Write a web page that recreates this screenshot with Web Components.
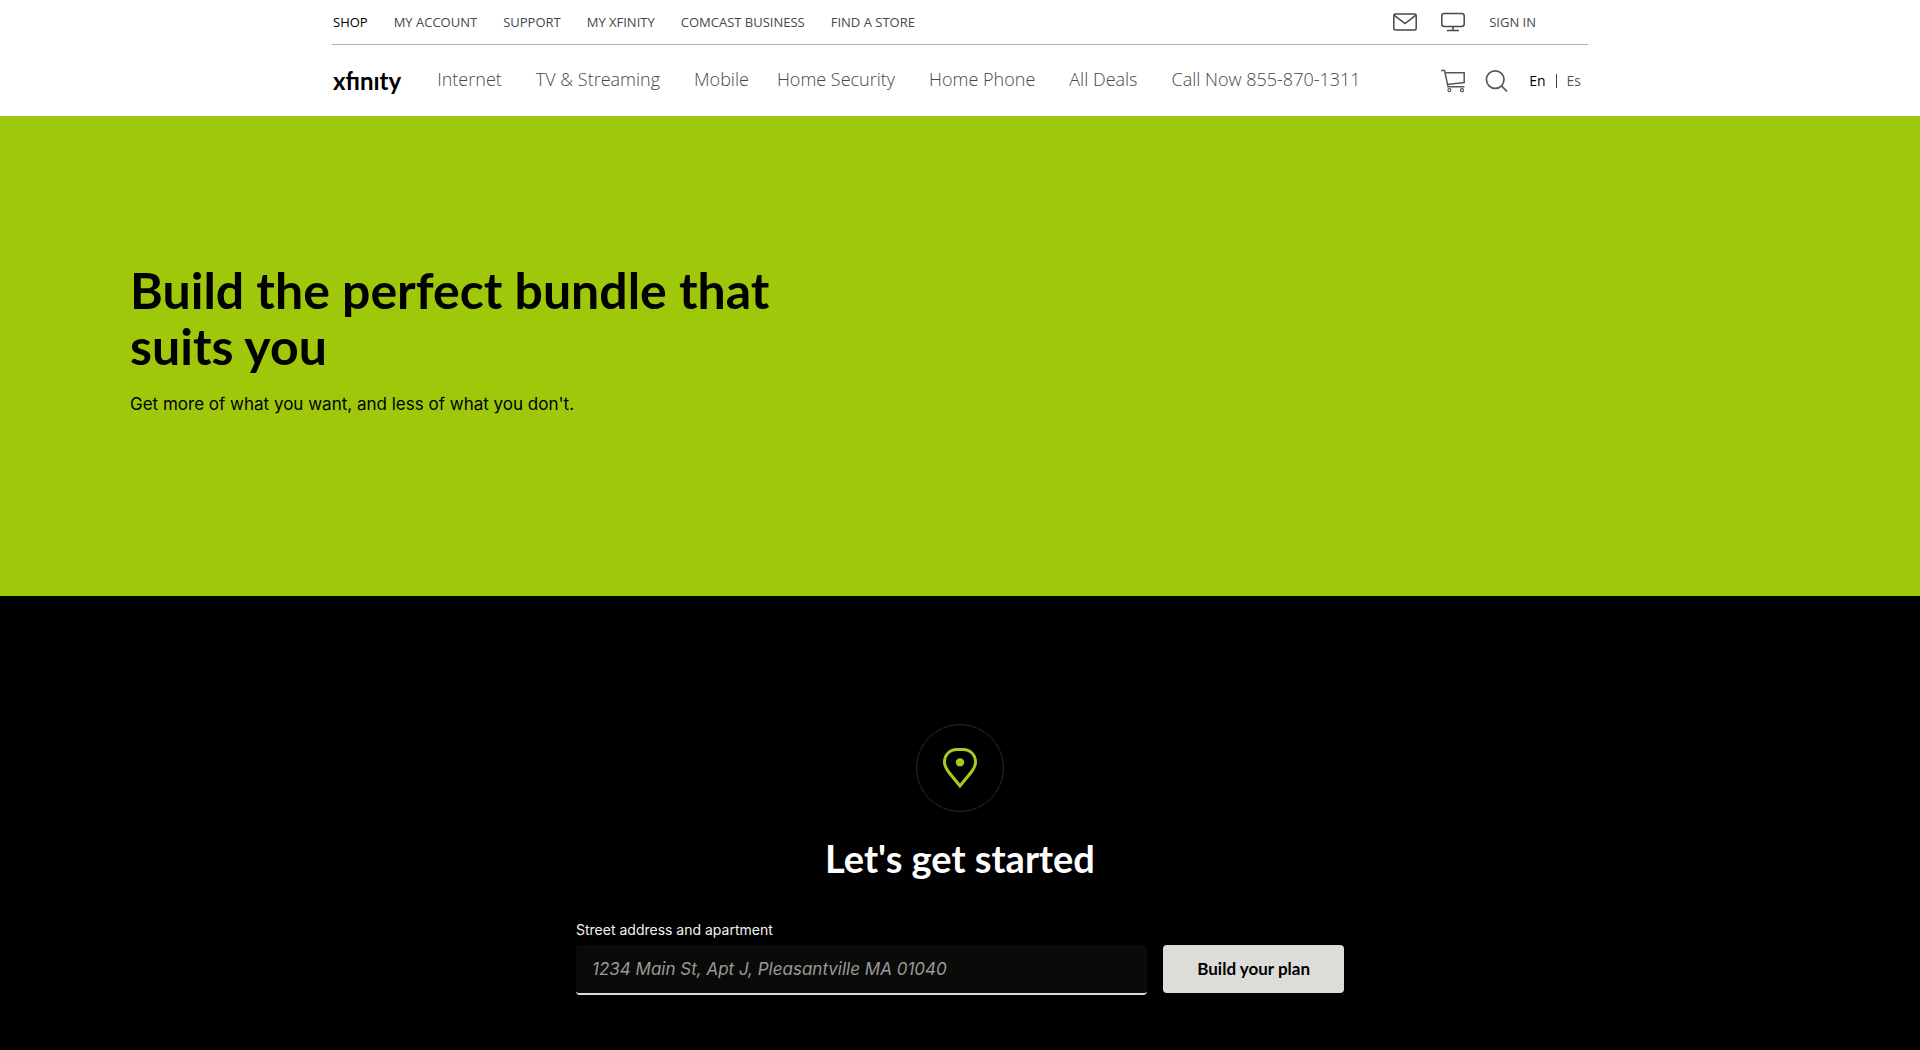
<!DOCTYPE html>
<html lang="en">
<head>
<meta charset="utf-8">
<title>Build your bundle</title>
<style>
  body {
    margin: 0;
    min-height: 100vh;
    display: flex;
    flex-direction: column;
    background: #000;
    font-family: "Open Sans", "Noto Sans", sans-serif;
  }
</style>
</head>
<body>

<xf-header>
  <xf-link slot="utility" kind="utility" current>SHOP</xf-link>
  <xf-link slot="utility" kind="utility">MY ACCOUNT</xf-link>
  <xf-link slot="utility" kind="utility">SUPPORT</xf-link>
  <xf-link slot="utility" kind="utility">MY XFINITY</xf-link>
  <xf-link slot="utility" kind="utility">COMCAST BUSINESS</xf-link>
  <xf-link slot="utility" kind="utility">FIND A STORE</xf-link>

  <xf-link slot="account" label="Email"><xf-icon name="mail"></xf-icon></xf-link>
  <xf-link slot="account" label="TV"><xf-icon name="tv"></xf-icon></xf-link>
  <xf-link slot="account" kind="utility">SIGN IN</xf-link>

  <xf-link slot="main" kind="main">Internet</xf-link>
  <xf-link slot="main" kind="main">TV &amp; Streaming</xf-link>
  <xf-link slot="main" kind="main" tight>Mobile</xf-link>
  <xf-link slot="main" kind="main">Home Security</xf-link>
  <xf-link slot="main" kind="main">Home Phone</xf-link>
  <xf-link slot="main" kind="main">All Deals</xf-link>
  <xf-link slot="main" kind="main">Call Now 855-870-1311</xf-link>

  <xf-link slot="tools" label="Cart"><xf-icon name="cart"></xf-icon></xf-link>
  <xf-link slot="tools" label="Search"><xf-icon name="search"></xf-icon></xf-link>
  <xf-language slot="tools"></xf-language>
</xf-header>

<xf-hero>
  <span slot="title">Build the perfect bundle that suits you</span>
  Get more of what you want, and less of what you don't.
</xf-hero>

<xf-start>
  <xf-icon slot="icon" name="pin"></xf-icon>
  <span slot="title">Let's get started</span>
  <xf-address-form></xf-address-form>
</xf-start>

<script>
(function () {
  const icons = {
    mail: {
      width: 24,
      height: 18,
      body: `<g fill="none" stroke="#44484c" stroke-width="1.5">
        <rect x="0.8" y="1" width="22.4" height="16" rx="1.5"/>
        <path d="M1 2.2 12 10.6 23 2.2"/>
      </g>`,
    },
    tv: {
      width: 24,
      height: 20,
      body: `<g fill="none" stroke="#44484c" stroke-width="1.5">
        <rect x="0.8" y="1.6" width="22.4" height="13" rx="2.5"/>
        <path d="M12 14.6V18.4M6 18.6H18"/>
      </g>`,
    },
    cart: {
      width: 24,
      height: 24,
      body: `<g fill="none" stroke="#55585a" stroke-width="1.5">
        <path d="M0 1.6H3.6L7 17.8H23.4"/>
        <path d="M4.2 3.7H23.2V13.6L6.2 15.4"/>
        <circle cx="8.4" cy="21.2" r="1.5" stroke-width="1.2"/>
        <circle cx="21" cy="21.2" r="1.5" stroke-width="1.2"/>
      </g>`,
    },
    search: {
      width: 24,
      height: 24,
      body: `<g fill="none" stroke="#55585a" stroke-width="1.7">
        <circle cx="10.2" cy="10.6" r="8.8"/>
        <path d="M16.4 16.8 22 22.4"/>
      </g>`,
    },
    pin: {
      width: 36,
      height: 42,
      body: `<path d="M18 39 7 25.5C3.8 21.4 2.5 18.6 2.5 15 2.5 7.6 7.8 2.5 15 2.5H21C28.2 2.5 33.5 7.6 33.5 15 33.5 18.6 32.2 21.4 29 25.5Z"
          fill="none" stroke="#a6cd1c" stroke-width="3"/>
        <circle cx="18" cy="15.4" r="4.2" fill="#a6cd1c"/>`,
    },
  };

  class XfIcon extends HTMLElement {
    constructor() {
      super();
      this.attachShadow({ mode: "open" });
    }

    connectedCallback() {
      const icon = icons[this.getAttribute("name")];

      this.shadowRoot.innerHTML = `
        <style>
          :host { display: block; }
          svg { display: block; }
        </style>
        <svg width="${icon.width}" height="${icon.height}"
          viewBox="0 0 ${icon.width} ${icon.height}" aria-hidden="true">${icon.body}</svg>
      `;
    }
  }

  class XfLink extends HTMLElement {
    constructor() {
      super();
      this.attachShadow({ mode: "open" });

      this.shadowRoot.innerHTML = `
        <style>
          :host { display: block; white-space: nowrap; }
          a {
            display: block;
            color: #44484c;
            text-decoration: none;
          }
          :host([kind="utility"]) { font-size: 13px; line-height: 16px; }
          :host([kind="main"]) {
            padding: 0 34px 4px 0;
            font-size: 18px;
            font-weight: 300;
            line-height: 24px;
          }
          :host([tight]) { padding-right: 28px; }
          :host([current]) a { color: #000; }
        </style>
        <a href="#"><slot></slot></a>
      `;
    }

    connectedCallback() {
      const label = this.getAttribute("label");

      if (label) {
        this.shadowRoot.querySelector("a").setAttribute("aria-label", label);
      }
    }
  }

  class XfLanguage extends HTMLElement {
    constructor() {
      super();
      this.attachShadow({ mode: "open" });

      this.shadowRoot.innerHTML = `
        <style>
          :host {
            display: flex;
            align-items: center;
            gap: 10px;
            font-size: 14px;
            line-height: 16px;
          }
          a { color: #55585a; text-decoration: none; }
          a.current { color: #000; }
          .bar { width: 1px; height: 14px; background: #44484c; }
        </style>
        <a class="current" href="#" lang="en">En</a>
        <span class="bar"></span>
        <a href="#" lang="es">Es</a>
      `;
    }
  }

  class XfHeader extends HTMLElement {
    constructor() {
      super();
      this.attachShadow({ mode: "open" });

      this.shadowRoot.innerHTML = `
        <style>
          :host { display: block; background: #fff; }
          header {
            max-width: 1256px;
            margin: 0 auto;
          }
          .row, nav, .side {
            display: flex;
            align-items: center;
          }
          .row { justify-content: space-between; }
          .utility {
            height: 44px;
            padding: 0 52px 0 1px;
            border-bottom: 1px solid #b0b0b0;
          }
          .utility nav { gap: 26px; }
          .utility .side { gap: 24px; }
          .main {
            height: 71px;
            padding: 0 7px 0 1px;
          }
          .main .side { gap: 20px; }
          .logo {
            padding-right: 36px;
            color: #000;
            font: 700 24px/32px Lato, sans-serif;
            text-decoration: none;
          }
        </style>
        <header>
          <div class="row utility">
            <nav aria-label="Sites"><slot name="utility"></slot></nav>
            <div class="side"><slot name="account"></slot></div>
          </div>
          <div class="row main">
            <nav aria-label="Main">
              <a class="logo" href="#" aria-label="xfinity">xfınıty</a>
              <slot name="main"></slot>
            </nav>
            <div class="side"><slot name="tools"></slot></div>
          </div>
        </header>
      `;
    }
  }

  class XfHero extends HTMLElement {
    constructor() {
      super();
      this.attachShadow({ mode: "open" });

      this.shadowRoot.innerHTML = `
        <style>
          :host {
            display: block;
            box-sizing: border-box;
            min-height: 480px;
            padding: 146px 130px;
            background: #a0c80a;
            color: #000;
          }
          h1 {
            max-width: 700px;
            margin: 0 0 16px;
            font: 700 50px/56px Lato, sans-serif;
          }
          p {
            margin: 0;
            font: 400 17px/28px Inter, sans-serif;
          }
        </style>
        <h1><slot name="title"></slot></h1>
        <p><slot></slot></p>
      `;
    }
  }

  class XfStart extends HTMLElement {
    constructor() {
      super();
      this.attachShadow({ mode: "open" });

      this.shadowRoot.innerHTML = `
        <style>
          :host {
            display: flex;
            flex: 1;
            flex-direction: column;
            align-items: center;
            padding: 128px 24px 48px;
            background: #000;
            color: #fff;
          }
          .badge {
            display: grid;
            place-items: center;
            box-sizing: border-box;
            width: 88px;
            height: 88px;
            border: 1px solid #2b2b2b;
            border-radius: 50%;
          }
          h2 {
            margin: 24px 0 40px;
            font: 700 38px/44px Lato, sans-serif;
          }
        </style>
        <div class="badge"><slot name="icon"></slot></div>
        <h2><slot name="title"></slot></h2>
        <slot></slot>
      `;
    }
  }

  class XfAddressForm extends HTMLElement {
    constructor() {
      super();
      this.attachShadow({ mode: "open" });

      this.shadowRoot.innerHTML = `
        <style>
          :host { display: block; width: 100%; max-width: 768px; }
          form { margin: 0; }
          label {
            display: block;
            margin-bottom: 5px;
            color: #f2f2f0;
            font: 400 14px/20px Inter, sans-serif;
          }
          .fields {
            display: flex;
            align-items: flex-start;
            gap: 16px;
          }
          input {
            flex: 1;
            min-width: 0;
            box-sizing: border-box;
            height: 50px;
            padding: 0 16px;
            border: 0;
            border-bottom: 2px solid #dcddd9;
            border-radius: 4px;
            background: #0a0a09;
            color: #fff;
            font: 400 17px/24px Inter, sans-serif;
          }
          input::placeholder { color: #9a9a98; font-style: italic; opacity: 1; }
          button {
            height: 48px;
            padding: 0 34px;
            border: 0;
            border-radius: 4px;
            background: #dcddd9;
            color: #000;
            font: 700 17px/24px Lato, sans-serif;
          }
        </style>
        <form>
          <label for="address">Street address and apartment</label>
          <div class="fields">
            <input id="address" type="text" placeholder="1234 Main St, Apt J, Pleasantville MA 01040">
            <button type="button">Build your plan</button>
          </div>
        </form>
      `;
    }
  }

  customElements.define("xf-icon", XfIcon);
  customElements.define("xf-link", XfLink);
  customElements.define("xf-language", XfLanguage);
  customElements.define("xf-header", XfHeader);
  customElements.define("xf-hero", XfHero);
  customElements.define("xf-start", XfStart);
  customElements.define("xf-address-form", XfAddressForm);
})();
</script>
</body>
</html>
